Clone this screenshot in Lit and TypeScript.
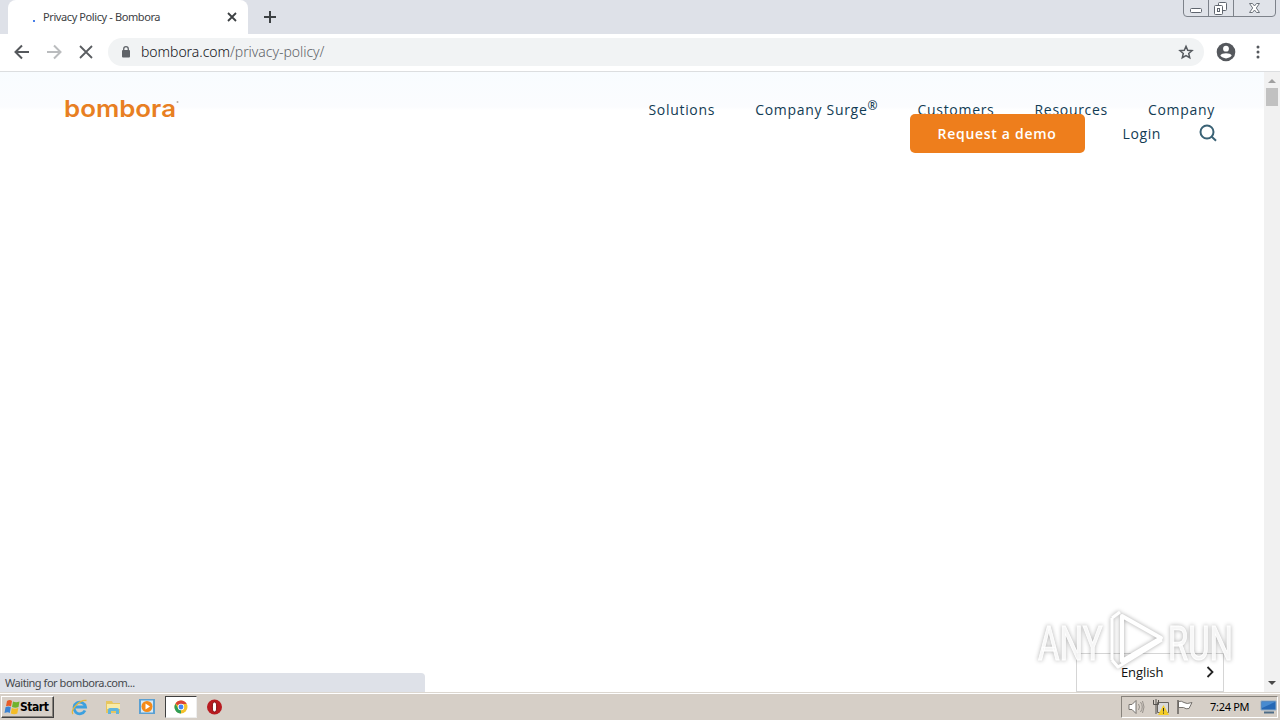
import { LitElement, html, css } from 'lit';
import { customElement } from 'lit/decorators.js';

@customElement('browser-chrome')
export class BrowserChrome extends LitElement {
    static styles = css`
    :host {
      display: block;
    }

    svg {
      display: block;
      flex: none;
    }

    .strip {
      display: flex;
      height: 34px;
      background: #dee1e8;
    }

    .tab {
      display: flex;
      align-items: center;
      box-sizing: border-box;
      width: 240px;
      margin-left: 8px;
      padding: 0 10px 0 25px;
      background: #fff;
      border-radius: 8px 8px 0 0;
    }

    .spinner {
      width: 2px;
      height: 2px;
      margin: 7px 8px 0 0;
      background: #4a80e8;
    }

    .title {
      flex: 1;
      padding-bottom: 2px;
      font: 11px "Noto Sans", sans-serif;
      letter-spacing: -0.4px;
      color: #3c4043;
      white-space: nowrap;
    }

    .plus {
      margin: 11px 0 0 16px;
    }

    .controls {
      margin: 0 4px 0 auto;
    }

    .toolbar {
      display: flex;
      align-items: center;
      box-sizing: border-box;
      height: 38px;
      padding: 0 0 2px 12px;
      background: #fff;
      border-bottom: 1px solid #dcdee0;
    }

    .nav {
      margin-right: 12px;
    }

    .omnibox {
      display: flex;
      align-items: center;
      box-sizing: border-box;
      width: 1096px;
      height: 28px;
      margin-right: 12px;
      padding: 0 10px 0 12px;
      background: #f1f3f4;
      border-radius: 14px;
    }

    .url {
      flex: 1;
      margin-left: 9px;
      font: 14px "Noto Sans", sans-serif;
      font-weight: 300;
      letter-spacing: -0.04px;
      color: #5f6368;
    }

    .host {
      color: #101114;
    }

    .menu {
      margin-left: 20px;
    }
  `;

    render() {
        return html`
      <div class="strip">
        <div class="tab">
          <div class="spinner"></div>
          <div class="title">Privacy Policy - Bombora</div>
          <svg width="12" height="12" viewBox="0 0 12 12" stroke="#3c4043" stroke-width="1.8">
            <path d="M2 2l8 8M10 2l-8 8" />
          </svg>
        </div>
        <svg class="plus" width="12" height="12" viewBox="0 0 12 12" stroke="#3c4043" stroke-width="2">
          <path d="M6 0v12M0 6h12" />
        </svg>
        <svg class="controls" width="93" height="17" viewBox="0 0 93 17" fill="none" stroke="#7d828a">
          <path d="M.5 0v13q0 3.500 3.500 3.500h85q3.500 0 3.500-3.500V0M25.500 0v16.500M50.500 0v16.500" fill="#e0e3e9" />
          <rect x="7.500" y="8.500" width="11" height="4" rx="1" fill="#fff" stroke="#5f656e" />
          <rect x="35.500" y="2.500" width="8" height="8" rx="1" fill="#fff" stroke="#5f656e" />
          <rect x="31.500" y="5.500" width="8" height="9" rx="1" fill="#fff" stroke="#5f656e" />
          <rect x="34.500" y="8.500" width="2" height="3" stroke="#5f656e" />
          <path d="M66.500 3.500h3l2 2.500 2-2.500h3l-3.200 4.500 3.200 4.500h-3l-2-2.500-2 2.500h-3l3.200-4.500z" fill="#fff" stroke="#6d737b" />
        </svg>
      </div>
      <div class="toolbar">
        <svg class="nav" width="20" height="20" viewBox="0 0 20 20" fill="none" stroke="#55585c" stroke-width="2">
          <path d="M17 10H4M10 3.500L3.500 10l6.500 6.500" />
        </svg>
        <svg class="nav" width="20" height="20" viewBox="0 0 20 20" fill="none" stroke="#babcbe" stroke-width="2">
          <path d="M3 10h13M10 3.500l6.500 6.500-6.500 6.500" />
        </svg>
        <svg class="nav" width="20" height="20" viewBox="0 0 20 20" stroke="#5a5d61" stroke-width="1.800">
          <path d="M4 4l12 12M16 4L4 16" />
        </svg>
        <div class="omnibox">
          <svg width="12" height="14" viewBox="0 0 12 14">
            <rect x="2" y="5" width="8" height="7.500" rx="1" fill="#5f6368" />
            <path d="M3.700 5.500V4a2.300 2.300 0 0 1 4.600 0v1.500" fill="none" stroke="#5f6368" stroke-width="1.300" />
          </svg>
          <div class="url"><span class="host">bombora.com</span>/privacy-policy/</div>
          <svg width="16" height="16" viewBox="0 0 16 16" fill="none" stroke="#55595e" stroke-width="1.500">
            <path d="M8 2.300l1.700 4 4.300.4-3.300 2.800 1 4.200L8 11.500l-3.700 2.200 1-4.200L2 6.700l4.300-.4z" />
          </svg>
        </div>
        <svg width="20" height="20" viewBox="0 0 20 20">
          <circle cx="10" cy="10" r="9.300" fill="#55585d" />
          <circle cx="10" cy="6.700" r="2.900" fill="#fff" />
          <path d="M4.300 13.600c1.300-3.200 10.100-3.200 11.400 0-2.600 3.700-8.800 3.700-11.400 0z" fill="#fff" />
        </svg>
        <svg class="menu" width="4" height="16" viewBox="0 0 4 16" fill="#55585d">
          <circle cx="2" cy="3" r="1.500" /><circle cx="2" cy="8" r="1.500" /><circle cx="2" cy="13" r="1.500" />
        </svg>
      </div>
    `;
    }
}

@customElement('site-page')
export class SitePage extends LitElement {
    static styles = css`
    :host {
      display: flex;
      position: relative;
      height: 620px;
      background: #fff;
      font-family: "Open Sans", sans-serif;
    }

    .content {
      display: flex;
      flex-direction: column;
      flex: 1;
    }

    .header {
      display: flex;
      justify-content: space-between;
      align-items: flex-start;
      padding: 26px 47px 0 64px;
      background: linear-gradient(#f8fcff, #fbfcfe 35px, #fff 38px);
    }

    .logo {
      display: block;
      margin-top: -10px;
    }

    .logo text {
      font: 600 23.500px "Inter", sans-serif;
      fill: #e87f22;
    }

    .menus {
      display: flex;
      flex-direction: column;
      align-items: flex-end;
      font-size: 14px;
      letter-spacing: 0.6px;
      color: #123c54;
    }

    .row {
      display: flex;
      gap: 40px;
      height: 24px;
      padding-right: 2px;
      line-height: 24px;
      letter-spacing: 0.7px;
      white-space: nowrap;
    }

    .row sup {
      font-size: 12px;
      line-height: 0;
      vertical-align: 5px;
      letter-spacing: 0;
      font-weight: 600;
    }

    .actions {
      display: flex;
      align-items: center;
      margin-top: -8px;
      z-index: 1;
    }

    .demo {
      width: 175px;
      height: 39px;
      margin-right: 38px;
      background: #ee7e1c;
      border-radius: 5px;
      color: #fff;
      font-weight: 600;
      letter-spacing: 0.7px;
      line-height: 39px;
      text-align: center;
    }

    .search {
      margin: 0 0 2px 38px;
    }

    .language {
      display: flex;
      align-items: center;
      box-sizing: border-box;
      width: 148px;
      height: 39px;
      margin: auto 40px 0 auto;
      padding: 0 9px 2px 44px;
      border: 1px solid #d5d5d5;
      font-size: 13px;
      letter-spacing: -0.1px;
      color: #111;
    }

    .language svg {
      margin-left: auto;
    }

    .scrollbar {
      display: flex;
      flex-direction: column;
      align-items: center;
      width: 16px;
      background: #f1f1f1;
    }

    .thumb {
      width: 12px;
      height: 18px;
      background: #c1c1c1;
    }

    .down {
      margin-top: auto;
    }

    .status {
      position: absolute;
      left: 0;
      bottom: 0;
      box-sizing: border-box;
      width: 425px;
      height: 19px;
      padding-left: 5px;
      background: #dee1e8;
      border-radius: 0 4px 0 0;
      font: 11px/20px "Noto Sans", sans-serif;
      letter-spacing: -0.46px;
      color: #45484c;
    }

    .watermark {
      position: absolute;
      left: 1030px;
      top: 530px;
      filter: drop-shadow(0 0 2px rgba(0, 0, 0, 0.35));
    }

    .watermark text {
      font: 49px "Roboto", sans-serif;
      fill: #fff;
      fill-opacity: 0.85;
      stroke: #fff;
      stroke-width: 1px;
    }
  `;

    render() {
        return html`
      <div class="content">
        <div class="header">
          <svg class="logo" width="140" height="42" viewBox="0 -10 140 42">
            <text x="0" y="19" textLength="112" lengthAdjust="spacingAndGlyphs">bombora</text>
            <circle cx="113.500" cy="4" r="1" fill="#b8aaa0" />
          </svg>
          <div class="menus">
            <div class="row">
              <span>Solutions</span>
              <span>Company Surge<sup>®</sup></span>
              <span>Customers</span>
              <span>Resources</span>
              <span>Company</span>
            </div>
            <div class="actions">
              <div class="demo">Request a demo</div>
              <span>Login</span>
              <svg class="search" width="18" height="18" viewBox="0 0 18 18" fill="none" stroke="#3a6275" stroke-width="2">
                <circle cx="8" cy="8" r="6.500" />
                <path d="M12.500 12.500l4.500 4.200" />
              </svg>
            </div>
          </div>
        </div>
        <div class="language">
          <span>English</span>
          <svg width="8" height="12" viewBox="0 0 8 12" fill="none" stroke="#222" stroke-width="1.800">
            <path d="M1.500 1l5 5-5 5" />
          </svg>
        </div>
      </div>
      <div class="scrollbar">
        <svg width="16" height="16" viewBox="0 0 16 16"><path d="M4 11h8L8 7z" fill="#a0a0a0" /></svg>
        <div class="thumb"></div>
        <svg class="down" width="16" height="17" viewBox="0 0 16 17"><path d="M4 6h8l-4 4z" fill="#4a4a4a" /></svg>
      </div>
      <div class="status">Waiting for bombora.com...</div>
      <svg class="watermark" width="240" height="80" viewBox="0 0 240 80">
        <text transform="translate(8 58) scale(.675 1)">ANY</text>
        <g fill="none" stroke="#fff" stroke-width="4" stroke-linejoin="round">
          <path d="M92 14L131 36 92 59z" />
          <path d="M82 58V16M82 16l8-6" stroke-width="3" />
          <path d="M82 58l6 7 44-27" stroke-width="3" />
        </g>
        <text transform="translate(138 58) scale(.67 1)">RUN</text>
      </svg>
    `;
    }
}

@customElement('task-bar')
export class TaskBar extends LitElement {
    static styles = css`
    :host {
      display: flex;
      align-items: center;
      box-sizing: border-box;
      height: 28px;
      padding: 1px 2px 0 1px;
      background: #d6cfc7;
      border-top: 1px solid #dcd7d0;
      box-shadow: inset 0 1px #fff;
      font: 11px "Noto Sans", sans-serif;
      color: #000;
    }

    svg {
      display: block;
      flex: none;
    }

    .start {
      display: flex;
      align-items: center;
      box-sizing: border-box;
      width: 53px;
      height: 22px;
      margin-right: 17px;
      padding-left: 2px;
      border: 1px solid;
      border-color: #fff #404040 #404040 #fff;
      box-shadow: inset -1px -1px #88837c;
      font: bold 12px "DejaVu Sans Condensed", sans-serif;
      letter-spacing: -0.45px;
    }

    .app {
      margin-right: 17px;
    }

    .active {
      display: flex;
      align-items: center;
      justify-content: center;
      box-sizing: border-box;
      width: 32px;
      height: 22px;
      margin: 0 10px 0 -8px;
      background: #fff;
      border: 1px solid;
      border-color: #404040 #eee #eee #404040;
    }

    .tray {
      display: flex;
      align-items: center;
      box-sizing: border-box;
      width: 157px;
      height: 22px;
      margin-left: auto;
      padding-left: 6px;
      border: 1px solid;
      border-color: #88837c #fff #fff #88837c;
    }

    .tray svg {
      margin-right: 8px;
    }

    .clock {
      width: 40px;
      margin: 0 10px 0 8px;
      padding-bottom: 1px;
      white-space: nowrap;
      letter-spacing: -0.3px;
    }

    .tray .desktop {
      margin: 0;
    }
  `;

    render() {
        return html`
      <div class="start">
        <svg width="16" height="16" viewBox="0 0 16 16">
          <path d="M3 2q3-2 5 0L7 7.500q-2-1.500-5-.3z" fill="#e75c28" />
          <path d="M9 2.500q3 1.500 6.500 0L14.500 8q-3 1.500-6.500 0z" fill="#70b32d" />
          <path d="M1.500 8.200q3-1.500 5.300 0l-1 5.800q-2-1.500-5.300 0z" fill="#3b83d3" />
          <path d="M7.800 9q3 1.500 6.500 0l-1 5.500q-3 1.500-6.500 0z" fill="#f4bc25" />
        </svg>
        <span>Start</span>
      </div>
      <svg class="app" width="17" height="18" viewBox="0 0 17 18" fill="none">
        <path d="M14 12.500A5.800 5.800 0 1 1 14.500 9H4" stroke="#3ca0df" stroke-width="2.800" />
        <path d="M2 16C-1 12 9 1 15.500 2.500" stroke="#e5b73c" stroke-width="1.300" />
      </svg>
      <svg class="app" width="17" height="18" viewBox="0 0 17 18">
        <path d="M1 3h6l1 2h7v10H1z" fill="#e7c65f" />
        <path d="M2 6h13v5H2z" fill="#f9eba6" />
        <path d="M3 16v-4q0-2 2-2h7q2 0 2 2v4h-3v-3H6v3z" fill="#61b5dc" />
      </svg>
      <svg class="app" width="17" height="18" viewBox="0 0 17 18">
        <rect x="0" y="1" width="16" height="15" fill="#5ba0d2" />
        <rect x="2" y="2.500" width="12" height="12" fill="#d8eaf5" />
        <circle cx="8" cy="8.500" r="5.500" fill="#f58a18" />
        <path d="M6.500 5.500l4.500 3-4.500 3z" fill="#fff" />
      </svg>
      <div class="active">
        <svg width="14" height="14" viewBox="0 0 14 14">
          <circle cx="7" cy="7" r="6.500" fill="#f4c22c" />
          <path d="M7 7L1.400 3.700A6.500 6.500 0 0 1 12.700 4H7z" fill="#db4437" />
          <path d="M7 7v6.500A6.500 6.500 0 0 1 1.400 3.700L4.500 9z" fill="#2f9d58" />
          <circle cx="7" cy="7" r="3.200" fill="#fff" />
          <circle cx="7" cy="7" r="2.400" fill="#4285f4" />
        </svg>
      </div>
      <svg width="16" height="16" viewBox="0 0 16 16">
        <circle cx="7.500" cy="8" r="7.500" fill="#b81b20" />
        <ellipse cx="7.500" cy="8" rx="2.200" ry="5" fill="#fff" stroke="#7d0d12" />
      </svg>
      <div class="tray">
        <svg width="17" height="16" viewBox="0 0 17 16" fill="none" stroke="#77736e">
          <path d="M1 5.500h3l4-4v13l-4-4H1z" fill="#fff" />
          <path d="M10.500 5q2 3 0 6M12.500 3q3.500 5 0 10M14.500 2q3 6 0 12" stroke="#96918b" />
        </svg>
        <svg width="16" height="16" viewBox="0 0 16 16">
          <path d="M4.500 3.500h11v10h-11z" fill="#d9d9d9" stroke="#67635e" />
          <path d="M.5 1v4.500h5V1M3 0v5M3 6v9" fill="none" stroke="#55524e" />
          <path d="M10.500 6l5.500 10H5z" fill="#f4cd26" />
          <path d="M10.500 9v3.500M10.500 13.500v1.200" stroke="#333" />
        </svg>
        <svg width="17" height="16" viewBox="0 0 17 16">
          <path d="M1.500 2.500q3-1 5.500 1t8 0l-3 6q-3 1-5.500-1h-5z" fill="#fff" stroke="#77736e" />
          <path d="M1 1v14" stroke="#66625e" stroke-width="1.500" />
        </svg>
        <span class="clock">7:24 PM</span>
        <svg class="desktop" width="17" height="16" viewBox="0 0 17 16">
          <path d="M1 2h15v9H1z" fill="#2568b5" stroke="#8cacc9" />
          <path d="M2 3h13L2 9z" fill="#478bd0" />
          <path d="M4 13.500h10" stroke="#4e6c87" stroke-width="2" />
        </svg>
      </div>
    `;
    }
}

@customElement('app-root')
export class AppRoot extends LitElement {
    static styles = css`
    :host {
      display: block;
      width: 1280px;
      height: 720px;
      overflow: hidden;
    }
  `;

    render() {
        return html`
      <browser-chrome></browser-chrome>
      <site-page></site-page>
      <task-bar></task-bar>
    `;
    }
}
